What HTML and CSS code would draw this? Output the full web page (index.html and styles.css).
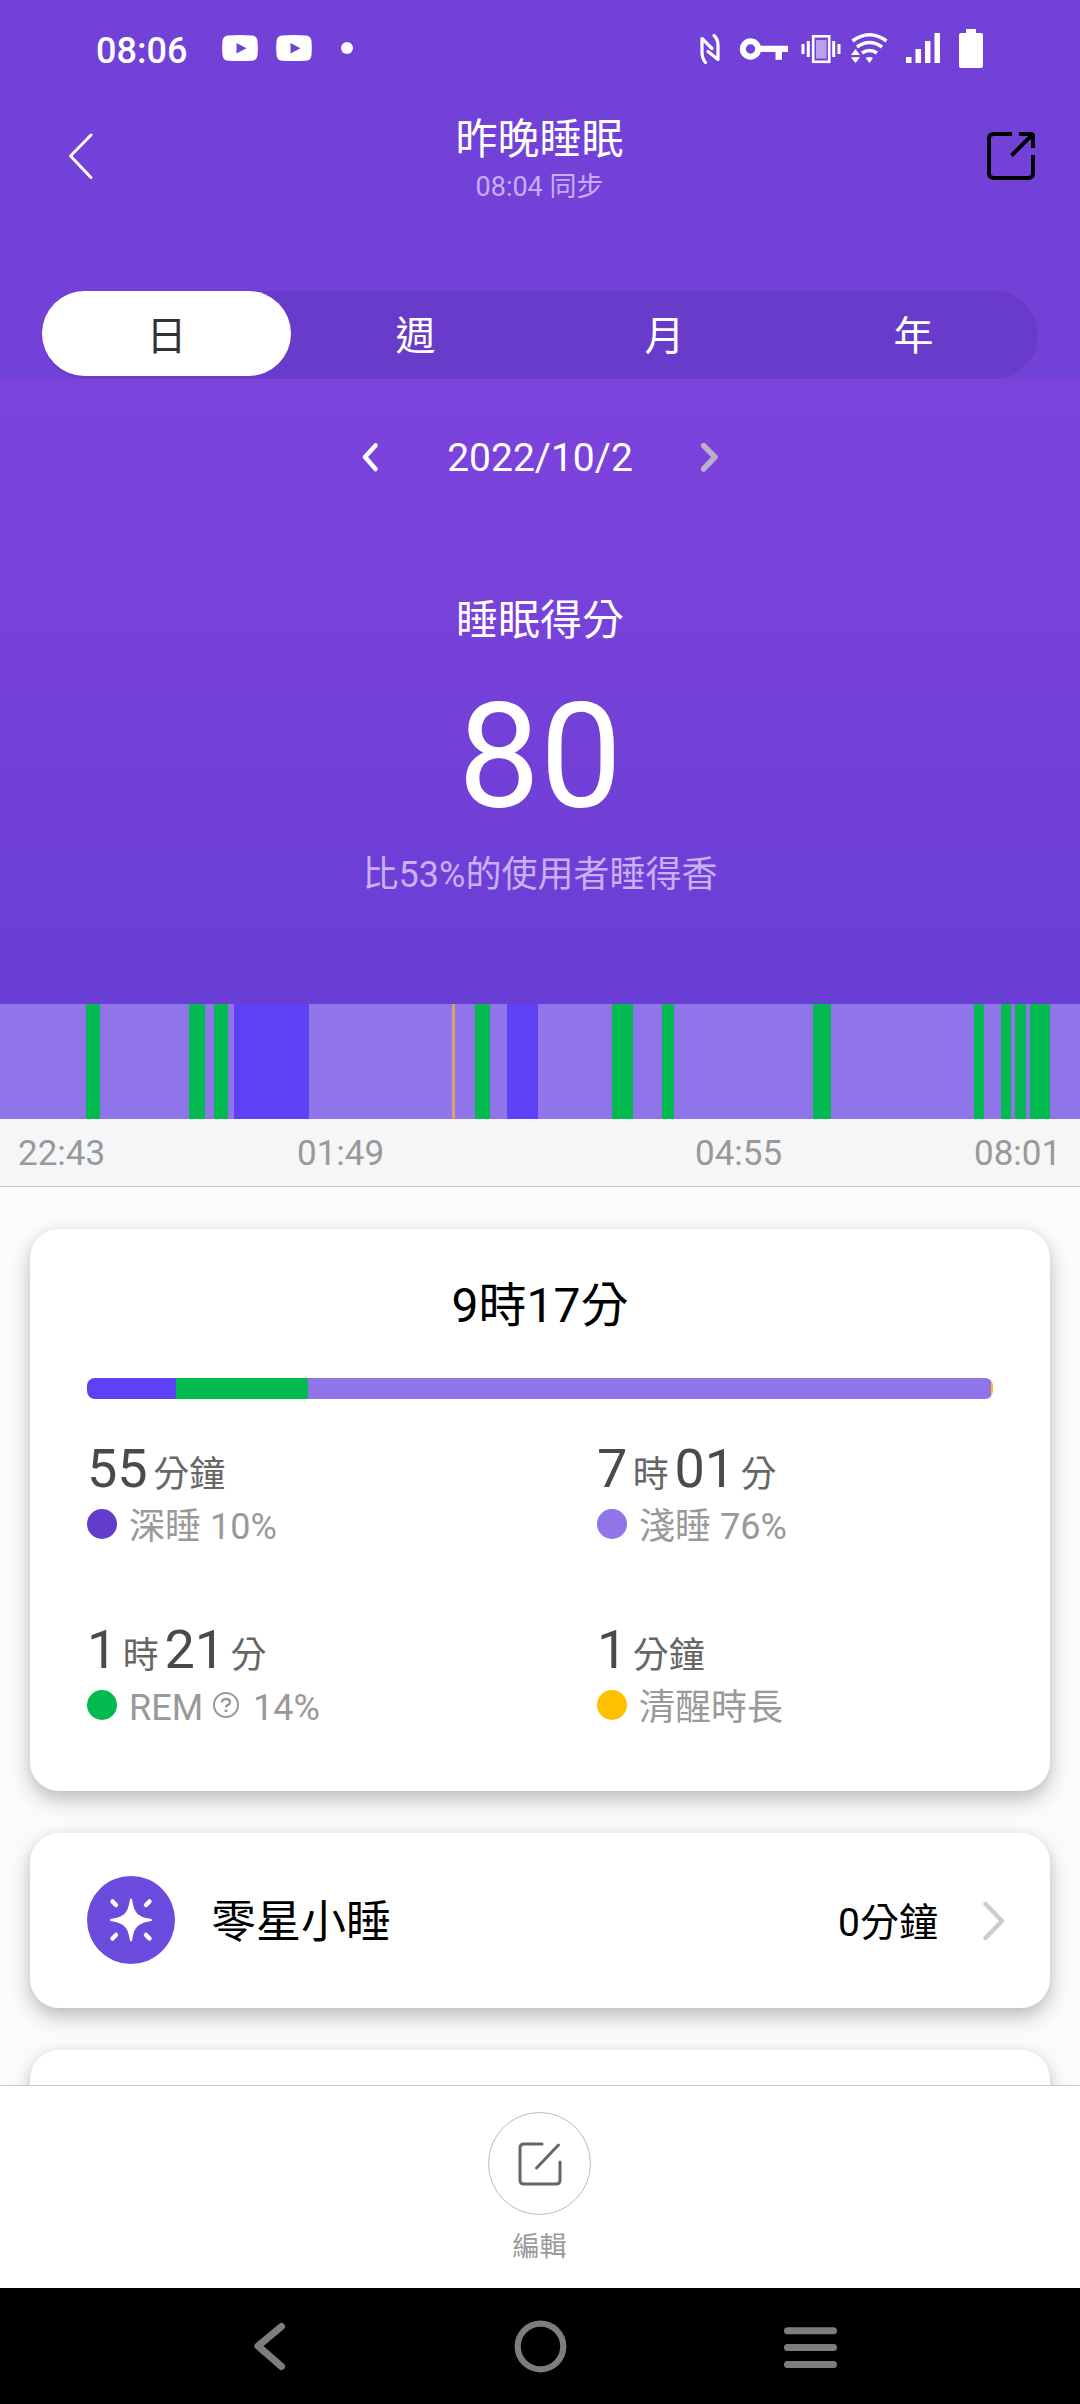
FILE: index.html
```html
<!DOCTYPE html>
<html lang="zh-Hant">
<head>
<meta charset="utf-8">
<title>昨晚睡眠</title>
<link rel="stylesheet" href="styles.css">
</head>
<body>
<div class="screen">
  <header class="header">
    <div class="statusbar">
      <span class="clock">08:06</span>
      <svg class="notices" width="131" height="40" viewBox="0 0 131 40" fill="#fff">
        <path fill-rule="evenodd" d="M6 7.500Q18 6.500 30 7.500Q35 8 35.500 13Q36.200 20 35.500 27Q35 32.500 30 32.700Q18 33.500 6 32.700Q1 32.500 .5 27Q-.2 20 .5 13Q1 8 6 7.500ZM14.500 15V25.500L24.500 20.200Z"/>
        <path fill-rule="evenodd" transform="translate(54)" d="M6 7.500Q18 6.500 30 7.500Q35 8 35.500 13Q36.200 20 35.500 27Q35 32.500 30 32.700Q18 33.500 6 32.700Q1 32.500 .5 27Q-.2 20 .5 13Q1 8 6 7.500ZM14.500 15V25.500L24.500 20.200Z"/>
        <circle cx="125" cy="20" r="6"/>
      </svg>
      <svg class="system" width="290" height="44" viewBox="698 26 290 44" fill="none" stroke="#fff">
        <g stroke-width="3.200" stroke-linecap="round" stroke-linejoin="round">
          <path d="M705.500 62.500Q702 58.500 702 52V38.500L712 48.500"/>
          <path d="M714 35.500Q718 39 718 45.500V59.500L708 51.500"/>
        </g>
        <circle cx="750.500" cy="49" r="7.700" stroke-width="6"/>
        <path d="M758 45.700H788V52H782V59.700H775.500V52H758Z" fill="#fff" stroke="none"/>
        <rect x="813.200" y="36.300" width="16" height="25.500" stroke-width="2.600"/>
        <rect x="816" y="40" width="10.500" height="18.500" fill="#bd9ff0" stroke="none"/>
        <path d="M803 44V54M808.300 41V57M833.700 41V57M839 44V54" stroke-width="3"/>
        <g stroke-width="3.600">
          <path d="M852.500 41Q869.500 28.500 886.500 41"/>
          <path d="M857 47Q869.500 38 882 47"/>
          <path d="M862 53Q869.500 48 877 53"/>
        </g>
        <path d="M865.500 58Q869.500 56 873 58L869.500 63ZM851 55H860L855.500 49ZM851 57.200H860L855.500 63Z" fill="#fff" stroke="none"/>
        <path d="M906 57H911.500V63H906ZM915.500 49H921V63H915.500ZM925 41H930.500V63H925ZM934.500 33H940V63H934.500Z" fill="#fff" stroke="none"/>
        <path d="M966 29H976V33H981Q983 33 983 35V66Q983 68 981 68H961Q959 68 959 66V35Q959 33 961 33H966Z" fill="#fff" stroke="none"/>
      </svg>
    </div>
    <div class="appbar">
      <svg class="back" width="30" height="50" viewBox="66 131 30 50"><path d="M91 135L70.500 156L91 177.500" fill="none" stroke="#fff" stroke-width="3" stroke-linecap="round" stroke-linejoin="round"/></svg>
      <div class="titles">
        <h1 class="title">昨晚睡眠</h1>
        <p class="synced">08:04 同步</p>
      </div>
      <svg class="share" width="48" height="48" viewBox="0 0 48 48" fill="none" stroke="#000" stroke-width="4">
        <path d="M25 2H7Q2 2 2 7V41Q2 46 7 46H41Q46 46 46 41V23"/>
        <path d="M32 2H44Q46 2 46 4V16M45.500 2.500L24.500 23.500"/>
      </svg>
    </div>
    <nav class="tabs">
      <span class="tab tab-active">日</span>
      <span class="tab">週</span>
      <span class="tab">月</span>
      <span class="tab">年</span>
    </nav>
  </header>

  <section class="hero">
    <div class="date-row">
      <svg width="18" height="30" viewBox="0 0 18 30"><path d="M14.500 2.500L4 14L14.500 26" fill="none" stroke="#fff" stroke-width="4.500" stroke-linecap="round" stroke-linejoin="round"/></svg>
      <span class="date">2022/10/2</span>
      <svg width="18" height="30" viewBox="0 0 18 30"><path d="M2.500 2.500L14 14L2.500 26" fill="none" stroke="#b9b1c4" stroke-width="5.500" stroke-linecap="round" stroke-linejoin="round"/></svg>
    </div>
    <h2 class="score-label">睡眠得分</h2>
    <div class="score">80</div>
    <p class="compare">比53%的使用者睡得香</p>
  </section>

  <div class="stages">
    <i class="light" style="width:86px"></i><i class="rem" style="width:14px"></i>
    <i class="light" style="width:89px"></i><i class="rem" style="width:15.500px"></i>
    <i class="light" style="width:9.500px"></i><i class="rem" style="width:14px"></i>
    <i class="light" style="width:5.700px"></i><i class="deep" style="width:75.300px"></i>
    <i class="light" style="width:143px"></i><i class="awake" style="width:2.700px"></i>
    <i class="light" style="width:20.800px"></i><i class="rem" style="width:14.200px"></i>
    <i class="light" style="width:17.200px"></i><i class="deep" style="width:31px"></i>
    <i class="light" style="width:73.700px"></i><i class="rem" style="width:21.400px"></i>
    <i class="light" style="width:29px"></i><i class="rem" style="width:12px"></i>
    <i class="light" style="width:139.500px"></i><i class="rem" style="width:17.500px"></i>
    <i class="light" style="width:143px"></i><i class="rem" style="width:10px"></i>
    <i class="light" style="width:17.500px"></i><i class="rem" style="width:9.500px"></i>
    <i class="light" style="width:4px"></i><i class="rem" style="width:11px"></i>
    <i class="light" style="width:4.500px"></i><i class="rem" style="width:19.500px"></i>
    <i class="light" style="width:30px"></i>
  </div>
  <div class="times"><span>22:43</span><span>01:49</span><span>04:55</span><span>08:01</span></div>

  <main class="content">
    <section class="card summary">
      <h2 class="total">9時17分</h2>
      <div class="ratio">
        <i class="deep" style="width:89px"></i><i class="rem" style="width:131.500px"></i><i class="light" style="width:683.500px"></i><i class="awake" style="width:2px"></i>
      </div>
      <div class="stats">
        <div class="stat">
          <div class="value"><b>55</b><span>分鐘</span></div>
          <div class="legend"><i class="dot dot-deep"></i><span>深睡 10%</span></div>
        </div>
        <div class="stat">
          <div class="value"><b>7</b><span>時</span><b>01</b><span>分</span></div>
          <div class="legend"><i class="dot light"></i><span>淺睡 76%</span></div>
        </div>
        <div class="stat">
          <div class="value"><b>1</b><span>時</span><b>21</b><span>分</span></div>
          <div class="legend"><i class="dot rem"></i><span>REM</span>
            <svg class="help" width="26" height="26" viewBox="0 0 26 26" fill="none" stroke="#999" stroke-width="2"><circle cx="13" cy="13" r="12"/><path d="M9 10.500Q9 7 13 7Q17 7 17 10.200Q17 12.300 14.500 13.200Q13 13.800 13 15.500" stroke-width="2.400"/><path d="M13 17.500V20" stroke-width="2.800"/></svg>
            <span>14%</span></div>
        </div>
        <div class="stat">
          <div class="value"><b>1</b><span>分鐘</span></div>
          <div class="legend"><i class="dot awake"></i><span>清醒時長</span></div>
        </div>
      </div>
    </section>
    <section class="card nap">
      <svg class="nap-icon" width="88" height="88" viewBox="0 0 88 88">
        <circle cx="44" cy="44" r="44" fill="#6b4bde"/>
        <path d="M44 22.500C45 22.500 45.200 24 45.500 26C47.500 37 51 40.500 62 42.500C64 42.900 65 43 65 44C65 45 64 45.100 62 45.500C51 47.500 47.500 51 45.500 62C45.200 64 45 65.500 44 65.500C43 65.500 42.800 64 42.500 62C40.500 51 37 47.500 26 45.500C24 45.100 23 45 23 44C23 43 24 42.900 26 42.500C37 40.500 40.500 37 42.500 26C42.800 24 43 22.500 44 22.500Z" fill="#fff"/>
        <path d="M25.500 25.500L29 29M62.500 25.500L59 29M25.500 62.500L29 59M62.500 62.500L59 59" stroke="#fff" stroke-width="4.500" stroke-linecap="round"/>
      </svg>
      <span class="nap-name">零星小睡</span>
      <span class="nap-value">0分鐘</span>
      <svg width="24" height="40" viewBox="0 0 24 40"><path d="M3.500 3L20 20L3.500 37" fill="none" stroke="#ccc" stroke-width="4.500" stroke-linecap="round" stroke-linejoin="round"/></svg>
    </section>
    <section class="card"></section>
  </main>

  <footer class="toolbar">
    <div class="edit">
      <svg width="44" height="44" viewBox="0 0 44 44" fill="none" stroke="#666" stroke-width="3" stroke-linecap="round"><path d="M24 2H6Q2 2 2 6V38Q2 42 6 42H38Q42 42 42 38V20"/><path d="M40.500 3L20 24.500L18.500 26" /></svg>
    </div>
    <span class="edit-label">編輯</span>
  </footer>

  <div class="sysnav">
    <svg width="1080" height="116" viewBox="0 0 1080 116" fill="none" stroke="#7d7d7d" stroke-linecap="round" stroke-linejoin="round">
      <path d="M281.500 38.500L258 58L281.500 78.500" stroke-width="7"/>
      <circle cx="540.500" cy="58.500" r="22.800" stroke-width="6.200"/>
      <path d="M787.500 42.700H833.500M787.500 59.500H833.500M787.500 76.500H833.500" stroke-width="7"/>
    </svg>
  </div>
</div>
</body>
</html>
```
FILE: styles.css
```css
* { box-sizing: border-box; }
body, h1, h2, p { margin: 0; font-weight: 400; }
body {
  font-family: Roboto, "Noto Sans CJK TC", sans-serif;
  background: #fbfbfb;
}
svg { display: block; flex: none; }

.screen {
  width: 1080px;
  height: 2404px;
  display: flex;
  flex-direction: column;
  overflow: hidden;
}
.screen > * { flex: none; }

.deep { background: #5e40f5; }
.rem { background: #03ba50; }
.light { background: #9074ea; }
.awake { background: #ffc000; }

/* header */
.header { height: 379px; background: #7241d8; color: #fff; }
.statusbar {
  height: 96px;
  padding: 0 92px 0 96px;
  display: flex;
  align-items: center;
}
.clock { font-size: 36px; font-weight: 500; line-height: 40px; padding-top: 5px; width: 126px; }
.system { margin-left: auto; }
.appbar {
  height: 120px;
  padding: 0 45px 0 66px;
  display: grid;
  grid-template-columns: 48px 1fr 48px;
  align-items: center;
}
.titles { text-align: center; padding: 19px 0 11px; margin-right: 22px; }
.title { font-size: 42px; line-height: 50px; }
.synced { font-size: 27px; line-height: 36px; margin-top: 4px; color: #c7adf3; }
.tabs {
  height: 88px;
  margin: 75px 42px 0;
  border-radius: 44px;
  background: #693bca;
  display: grid;
  grid-template-columns: repeat(4, 1fr);
}
.tab { height: 85px; padding-top: 6px; font-size: 40px; line-height: 79px; text-align: center; border-radius: 43px; }
.tab-active { background: #fff; color: #333; }

/* score */
.hero {
  height: 625px;
  padding-top: 49px;
  background: linear-gradient(#7b43dc 0%, #7a42db 25%, #693ed4 100%);
  color: #fff;
  text-align: center;
}
.date-row { height: 60px; display: flex; justify-content: center; align-items: center; gap: 68px; }
.date { font-size: 39px; line-height: 60px; }
.score-label { margin-top: 103px; font-size: 42px; line-height: 60px; }
.score { margin-top: 32px; font-size: 146px; line-height: 150px; }
.compare { margin-top: 17px; font-size: 36px; line-height: 50px; color: #c7b0f4; }

/* night timeline */
.stages { height: 115px; display: flex; }
.stages > i { flex: none; }
.stages .awake { background: #dca06a; }
.times {
  height: 68px;
  padding: 1px 18px 0;
  display: grid;
  grid-template-columns: 279px 398px 279px auto;
  background: #f5f6f8;
  border-bottom: 1px solid #c4c6cc;
  color: #999;
  font-size: 35px;
  line-height: 68px;
}

/* cards */
.content {
  height: 898px;
  padding: 42px 30px 0;
  display: flex;
  flex-direction: column;
  gap: 42px;
  overflow: hidden;
}
.card {
  flex: none;
  min-height: 175px;
  border-radius: 29px;
  background: #fff;
  box-shadow: 0 9px 20px rgba(0, 0, 0, .24), 0 0 10px rgba(0, 0, 0, .05);
}
.summary { height: 562px; padding: 47px 57px 0; }
.total { text-align: center; font-size: 48px; line-height: 60px; color: #000; }
.ratio { height: 21px; margin-top: 42px; display: flex; border-radius: 8px; overflow: hidden; }
.stats { margin-top: 38px; display: grid; grid-template-columns: 510px 1fr; row-gap: 70px; }
.value { height: 64px; display: flex; align-items: baseline; gap: 5.500px; line-height: 64px; }
.value b { font-size: 54px; font-weight: 400; color: #4a4a4a; }
.value span { font-size: 36px; color: #666; }
.legend { height: 44px; margin-top: 3px; display: flex; align-items: center; font-size: 36px; line-height: 44px; color: #999; }
.legend span { padding-top: 2px; }
.dot { width: 30px; height: 30px; border-radius: 50%; margin: 0 12px 4px 0; }
.dot-deep { background: #623dcd; }
.help { margin: 0 14px 4px 10px; }

.nap { height: 175px; padding: 0 44px 0 57px; display: flex; align-items: center; color: #000; }
.nap-icon { margin-bottom: 1px; }
.nap-name { margin-left: 36px; font-size: 45px; line-height: 60px; padding-top: 4px; }
.nap-value { margin-left: auto; margin-right: 44px; font-size: 39px; line-height: 50px; padding-top: 5px; }

/* bottom toolbar */
.toolbar {
  height: 203px;
  padding: 26px 1px 0 0;
  background: #fff;
  border-top: 1px solid #c8c8c8;
  display: flex;
  flex-direction: column;
  align-items: center;
}
.edit { width: 103px; height: 103px; border: 1px solid #bbb; border-radius: 50%; display: flex; align-items: center; justify-content: center; }
.edit-label { margin-top: 14px; font-size: 27px; line-height: 36px; color: #999; }

.sysnav { height: 116px; background: #000; }
```
